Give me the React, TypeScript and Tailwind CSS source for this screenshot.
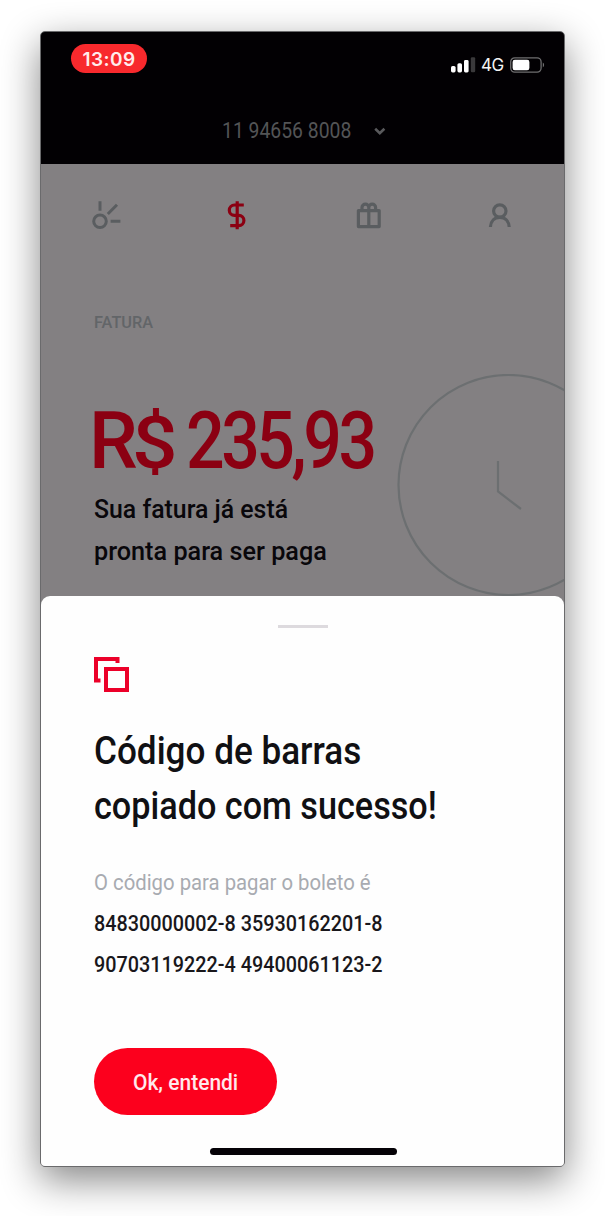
import type { ReactNode } from "react";

function Line({ className, children }: { className: string; children: ReactNode }) {
  return <span className={`block w-max origin-left whitespace-nowrap ${className}`}>{children}</span>;
}

function StatusBar() {
  return (
    <div className="flex justify-between pl-[30px] pr-[19px]">
      <span className="flex h-[29px] w-[76px] items-center justify-center rounded-full bg-[#f8292d] pt-[3px] font-['Inter'] text-[19px] font-semibold tracking-[0.4px] text-[#ffecec]">
        13:09
      </span>
      <div className="flex h-[41px] items-center">
        <svg width="25" height="16" viewBox="0 0 25 16" className="mr-[5px]">
          <rect x="0" y="9" width="4.6" height="6.4" rx="1.6" fill="#fff" />
          <rect x="6.4" y="6.2" width="4.6" height="9.2" rx="1.6" fill="#fff" />
          <rect x="13" y="3" width="4.6" height="12.4" rx="1.4" fill="#fff" />
          <rect x="19.8" y="0.3" width="4.4" height="15" rx="1.2" fill="#3a393b" />
        </svg>
        <span className="mr-[6px] w-[23px] whitespace-nowrap font-['Inter'] text-[17px] leading-5 tracking-[-0.6px] text-[#f4f4f4]">
          4G
        </span>
        <svg width="35" height="16" viewBox="0 0 35 16">
          <rect x="0.7" y="0.9" width="30.4" height="14.2" rx="4" fill="none" stroke="#6f6e70" strokeWidth="1.3" />
          <rect x="2.6" y="2.7" width="16.8" height="10.6" rx="2.2" fill="#fff" />
          <path d="M32.8 5.6c1.8.8 1.8 4 0 4.8z" fill="#6f6e70" />
        </svg>
      </div>
    </div>
  );
}

function Tabs() {
  return (
    <nav className="grid h-[32px] grid-cols-4 items-center">
      <svg width="32" height="32" viewBox="0 0 32 32" fill="none" stroke="#5a5d60" strokeWidth="3" className="ml-[49px]">
        <circle cx="10" cy="21.3" r="6.3" />
        <path d="M10 1.200v9.600M17.800 14 27 4.800M20.600 21.300h9.800" />
      </svg>
      <svg width="32" height="32" viewBox="0 0 32 32" fill="none" stroke="#8c0012" strokeWidth="3.200" className="ml-[49px]">
        <path d="M22.800 5H13.500a5.100 5.100 0 0 0 0 10.400h4.300a5 5 0 0 1 0 10.200H9.200M16.200 1.200v28" />
      </svg>
      <svg width="32" height="32" viewBox="0 0 32 32" fill="none" stroke="#5a5d60" strokeWidth="3.200" className="ml-[50px]" strokeLinejoin="round">
        <path d="M5.400 10.600h20.800v16H5.400zM15.800 10v16M9 10V7.600a3.400 3.400 0 0 1 6.800 0V10M15.800 10V7.600a3.400 3.400 0 0 1 6.800 0V10" />
      </svg>
      <svg width="32" height="32" viewBox="0 0 32 32" fill="none" stroke="#5a5d60" strokeWidth="3.200" className="ml-[51px]">
        <circle cx="15.800" cy="11" r="6.200" />
        <path d="M6.400 27c.4-6 4.200-9.600 9.400-9.600s9 3.600 9.400 9.600" />
      </svg>
    </nav>
  );
}

export default function App() {
  return (
    <div className="h-[1216px] w-[605px] overflow-hidden bg-white pl-[40px] pt-[31px] font-['Roboto',sans-serif]">
      <div className="flex h-[1136px] w-[525px] flex-col overflow-hidden rounded-[5px] border border-[#6a6a6c] bg-[#838082] shadow-[0_13px_38px_rgba(0,0,0,0.48)]">
        <header className="h-[132px] shrink-0 bg-[#020003] pt-3">
          <StatusBar />
          <div className="mt-[27px] flex h-[36px] items-center pl-[181px] text-[22px] text-[#535456]">
            <div className="w-[152px]">
              <Line className="scale-x-[0.88]">11 94656 8008</Line>
            </div>
            <svg width="12" height="9" viewBox="0 0 12 9" fill="none" stroke="#59595c" strokeWidth="2.600" className="mt-[2px]">
              <path d="m1.200 1.800 4.600 4.300 4.600-4.300" />
            </svg>
          </div>
        </header>

        <main className="relative h-[432px] shrink-0 overflow-hidden bg-[#838082] pt-[36px]">
          <Tabs />
          <div className="pl-[53px]">
            <p className="mt-[81px] text-[16px] leading-5 text-[#626568]">
              <Line className="scale-x-[1.02] font-medium">FATURA</Line>
            </p>
            <h1 className="-ml-[5px] mt-[68px] flex h-[80px] text-[79px] font-medium leading-[80px] text-[#8b0012]">
              <span className="w-[97px]">
                <Line className="scale-x-[0.98] tracking-[-6px]">
                  R<span className="inline-block origin-left scale-x-[1.12] text-[73px]">$</span>{" "}
                </Line>
              </span>
              <Line className="scale-x-[0.86] tracking-[-4px]">235,93</Line>
            </h1>
            <p className="mt-[7px] text-[26px] font-medium leading-[42px] text-[#09070b]">
              <Line className="scale-x-[0.955]">Sua fatura já está</Line>
              <Line className="scale-x-[0.97]">pronta para ser paga</Line>
            </p>
          </div>
          <svg width="170" height="224" viewBox="0 0 170 224" fill="none" stroke="#6c6f71" strokeWidth="2.200" className="absolute right-0 top-[210px]">
            <circle cx="114.500" cy="111" r="110" />
            <path d="M104 87v30.500L127 135" />
          </svg>
        </main>

        <section className="flex grow flex-col rounded-t-[9px] bg-[#fefefe] pl-[53px] pt-[29px]">
          <div className="ml-[184px] h-[3px] w-[50px] shrink-0 bg-[#dddade]" />
          <svg width="36" height="36" viewBox="0 0 36 36" fill="none" stroke="#ec0029" strokeWidth="4" className="mt-[29px] shrink-0">
            <path d="M23.500 6V2H2v21.500h4.500" />
            <path d="M12 12h21v21H12z" />
          </svg>
          <h2 className="mt-[31px] text-[38px] font-medium leading-[55px] text-[#101013]">
            <Line className="scale-x-[0.924]">Código de barras</Line>
            <Line className="scale-x-[0.9]">copiado com sucesso!</Line>
          </h2>
          <p className="mt-[28px] text-[22px] leading-[41px] text-[#a8abb1]">
            <Line className="scale-x-[0.923]">O código para pagar o boleto é</Line>
          </p>
          <p className="text-[22px] font-medium leading-[41px] text-[#19171b]">
            <Line className="scale-x-[0.9]">84830000002-8 35930162201-8</Line>
            <Line className="scale-x-[0.9]">90703119222-4 49400061123-2</Line>
          </p>
          <button className="mt-[63px] flex h-[67px] w-[183px] shrink-0 items-center rounded-full bg-[#fc001d] pl-[39px] pt-[3px] text-[21.500px] font-medium text-[#ffe9ec]">
            <Line className="scale-x-[0.975]">Ok, entendi</Line>
          </button>
          <div className="ml-[116px] mt-[33px] h-[7px] w-[187px] shrink-0 rounded-full bg-[#050207]" />
        </section>
      </div>
    </div>
  );
}
